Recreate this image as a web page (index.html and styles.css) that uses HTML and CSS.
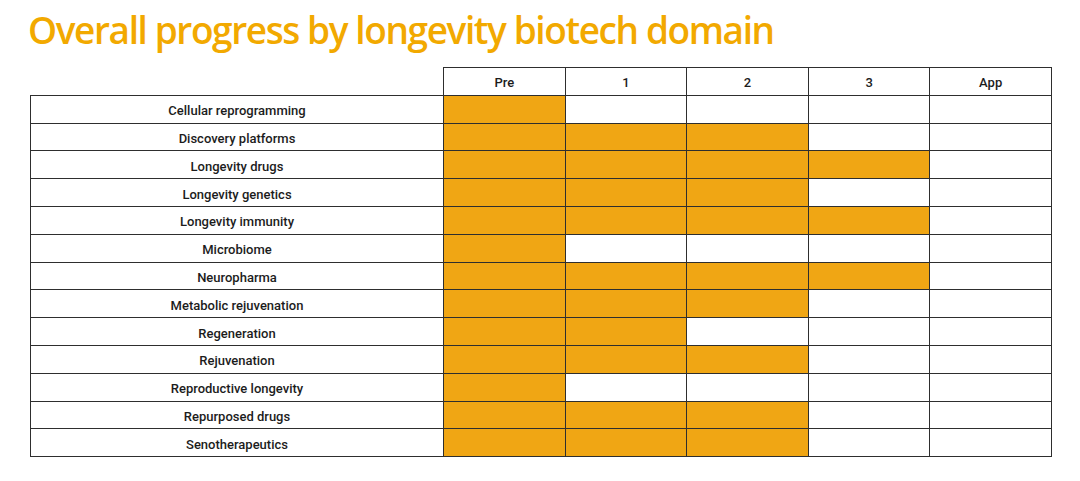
FILE: index.html
```html
<!DOCTYPE html>
<html>
<head>
<meta charset="utf-8">
<link rel="stylesheet" href="styles.css">
</head>
<body>
<h1 class="title">Overall progress by longevity biotech domain</h1>
<table class="grid">
  <colgroup>
    <col class="c-label"><col class="c-stage"><col class="c-stage"><col class="c-stage"><col class="c-stage"><col class="c-stage">
  </colgroup>
  <thead>
    <tr><th class="blank"></th><th>Pre</th><th>1</th><th>2</th><th>3</th><th>App</th></tr>
  </thead>
  <tbody>
    <tr><td class="label">Cellular reprogramming</td><td class="on"></td><td></td><td></td><td></td><td></td></tr>
    <tr><td class="label">Discovery platforms</td><td class="on"></td><td class="on"></td><td class="on"></td><td></td><td></td></tr>
    <tr><td class="label">Longevity drugs</td><td class="on"></td><td class="on"></td><td class="on"></td><td class="on"></td><td></td></tr>
    <tr><td class="label">Longevity genetics</td><td class="on"></td><td class="on"></td><td class="on"></td><td></td><td></td></tr>
    <tr><td class="label">Longevity immunity</td><td class="on"></td><td class="on"></td><td class="on"></td><td class="on"></td><td></td></tr>
    <tr><td class="label">Microbiome</td><td class="on"></td><td></td><td></td><td></td><td></td></tr>
    <tr><td class="label">Neuropharma</td><td class="on"></td><td class="on"></td><td class="on"></td><td class="on"></td><td></td></tr>
    <tr><td class="label">Metabolic rejuvenation</td><td class="on"></td><td class="on"></td><td class="on"></td><td></td><td></td></tr>
    <tr><td class="label">Regeneration</td><td class="on"></td><td class="on"></td><td></td><td></td><td></td></tr>
    <tr><td class="label">Rejuvenation</td><td class="on"></td><td class="on"></td><td class="on"></td><td></td><td></td></tr>
    <tr><td class="label">Reproductive longevity</td><td class="on"></td><td></td><td></td><td></td><td></td></tr>
    <tr><td class="label">Repurposed drugs</td><td class="on"></td><td class="on"></td><td class="on"></td><td></td><td></td></tr>
    <tr><td class="label">Senotherapeutics</td><td class="on"></td><td class="on"></td><td class="on"></td><td></td><td></td></tr>
  </tbody>
</table>
</body>
</html>
```
FILE: styles.css
```css
html, body {
  margin: 0;
  padding: 0;
  background: #ffffff;
}
body {
  font-family: "Open Sans", "Noto Sans", sans-serif;
  color: #1a1a1a;
}
.title {
  margin: 0;
  padding: 7px 0 0 28px;
  height: 60px;
  box-sizing: border-box;
  font-size: 37px;
  font-weight: 600;
  line-height: 46px;
  color: #f2a900;
  letter-spacing: -1.4px;
  white-space: nowrap;
}
.grid {
  margin: 7px 0 0 30px;
  border-collapse: collapse;
  table-layout: fixed;
  width: 1021px;
}
.c-label { width: 413px; }
.c-stage { width: 121.6px; }
.grid th, .grid td {
  height: 27.8px;
  padding: 3px 0 0 0;
  border: 1.5px solid #2e2e2e;
  text-align: center;
  vertical-align: middle;
  font-family: Roboto, "Noto Sans", sans-serif;
  font-size: 13px;
  font-weight: 500;
  color: #1c1c1c;
  box-sizing: border-box;
}
.grid th.blank {
  border-top: none;
  border-left: none;
}
.grid td.on {
  background: #f0a614;
}
```
